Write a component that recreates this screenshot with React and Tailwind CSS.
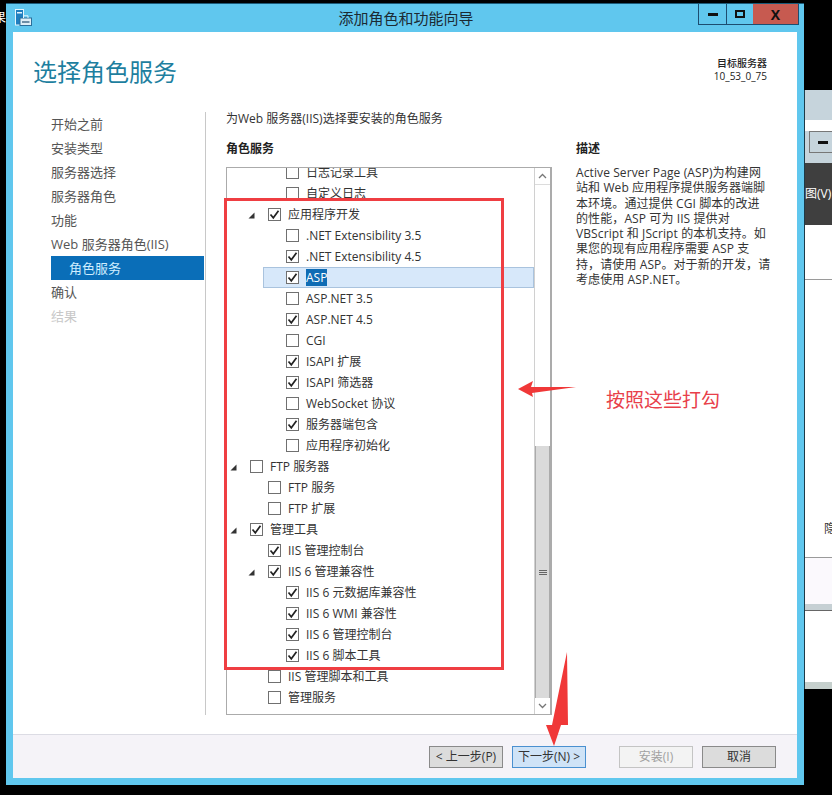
const font = "font-['Open_Sans','Noto_Sans_CJK_SC',sans-serif]";

const rows = [
  { level: 1, label: "日志记录工具" },
  { level: 1, label: "自定义日志" },
  { level: 0.5, label: "应用程序开发", checked: true, open: true },
  { level: 1, label: ".NET Extensibility 3.5" },
  { level: 1, label: ".NET Extensibility 4.5", checked: true },
  { level: 1, label: "ASP", checked: true, selected: true },
  { level: 1, label: "ASP.NET 3.5" },
  { level: 1, label: "ASP.NET 4.5", checked: true },
  { level: 1, label: "CGI" },
  { level: 1, label: "ISAPI 扩展", checked: true },
  { level: 1, label: "ISAPI 筛选器", checked: true },
  { level: 1, label: "WebSocket 协议" },
  { level: 1, label: "服务器端包含", checked: true },
  { level: 1, label: "应用程序初始化" },
  { level: 0, label: "FTP 服务器", open: true },
  { level: 0.5, label: "FTP 服务" },
  { level: 0.5, label: "FTP 扩展" },
  { level: 0, label: "管理工具", checked: true, open: true },
  { level: 0.5, label: "IIS 管理控制台", checked: true },
  { level: 0.5, label: "IIS 6 管理兼容性", checked: true, open: true },
  { level: 1, label: "IIS 6 元数据库兼容性", checked: true },
  { level: 1, label: "IIS 6 WMI 兼容性", checked: true },
  { level: 1, label: "IIS 6 管理控制台", checked: true },
  { level: 1, label: "IIS 6 脚本工具", checked: true },
  { level: 0.5, label: "IIS 管理脚本和工具" },
  { level: 0.5, label: "管理服务" },
];

const navItems = ["开始之前", "安装类型", "服务器选择", "服务器角色", "功能", "Web 服务器角色(IIS)"];

const Checkbox = ({ checked }) => (
  <span className="w-[13px] h-[13px] border border-[#707070] bg-white shrink-0 flex items-center justify-center">
    {checked && (
      <svg width="11" height="11" viewBox="0 0 11 11">
        <path d="M1.5 5.5 L4.3 8.8 L9.5 1.8" fill="none" stroke="#222" strokeWidth="1.7" />
      </svg>
    )}
  </span>
);

const Row = ({ row }) => {
  const pad = row.level === 0 ? "pl-[23px]" : row.level === 0.5 ? "pl-[41px]" : "pl-[59px]";
  return (
    <div className={`relative h-[21px] flex items-center gap-[7px] ${pad}`}>
      {row.selected && (
        <div className="absolute left-[36px] right-0 top-0 h-[21px] bg-[#d7e8fa] border border-[#a9c3de]" />
      )}
      {row.open && (
        <svg
          className={`absolute top-[8px] ${row.level === 0 ? "left-[3px]" : "left-[21px]"}`}
          width="7"
          height="7"
          viewBox="0 0 7 7"
        >
          <path d="M6.5 0.5 V6.5 H0.5 Z" fill="#333" />
        </svg>
      )}
      <div className="relative flex items-center gap-[7px]">
        <Checkbox checked={row.checked} />
        <span className={`whitespace-nowrap ${row.selected ? "bg-[#0f6cb4] text-white leading-[17px]" : ""}`}>
          {row.label}
        </span>
      </div>
    </div>
  );
};

const Scrollbar = () => (
  <div className="w-[17px] shrink-0 flex flex-col border-l border-[#d0d0d0] border-r border-r-[#ababab]">
    <div className="h-[17px] bg-white flex items-center justify-center border-b border-[#dcdcdc]">
      <svg width="9" height="6" viewBox="0 0 9 6">
        <path d="M1 5 L4.5 1.5 L8 5" fill="none" stroke="#777" strokeWidth="1.3" />
      </svg>
    </div>
    <div className="h-[261px] bg-white" />
    <div className="flex-1 bg-[#dadada] border-x border-[#ababab] flex items-center justify-center">
      <div className="w-[8px] flex flex-col gap-[1px]">
        <div className="h-[1px] bg-[#666]" />
        <div className="h-[1px] bg-[#666]" />
        <div className="h-[1px] bg-[#666]" />
      </div>
    </div>
    <div className="h-[16px] bg-white flex items-center justify-center">
      <svg width="9" height="6" viewBox="0 0 9 6">
        <path d="M1 1 L4.5 4.5 L8 1" fill="none" stroke="#777" strokeWidth="1.3" />
      </svg>
    </div>
  </div>
);

const FooterButton = ({ children, className }) => (
  <button className={`w-[74px] h-[22px] border text-[12px] flex items-center justify-center ${className}`}>
    {children}
  </button>
);

const ServerIcon = () => (
  <svg width="17" height="17" viewBox="0 0 17 17" className="shrink-0">
    <rect x="0.5" y="0.5" width="8" height="15.5" fill="#1f7fc0" stroke="#e4f5fc" />
    <rect x="2" y="3" width="5" height="1.5" fill="#e6f4fb" />
    <rect x="5" y="9" width="11.5" height="7.5" fill="#dfeef6" stroke="#2b6f9a" />
    <rect x="7" y="12" width="7.5" height="2" fill="#6d8ea6" />
    <path d="M8.5 9 V6.8 H13 V9" fill="none" stroke="#e4f5fc" />
  </svg>
);

const App = () => {
  return (
    <div className={`relative w-[832px] h-[795px] bg-black overflow-hidden flex items-start ${font}`}>
      {/* stray letter from the window behind */}
      <div className="w-[6px] h-[40px] shrink-0 overflow-hidden relative">
        <span className="absolute right-0 top-[11px] text-white text-[12px] leading-[14px]">果</span>
      </div>

      {/* wizard window */}
      <div className="w-[798px] h-[782px] mt-[3px] shrink-0 bg-[#60c7ee] px-[7px] pb-[7px] flex flex-col border-t border-[#1c5a78]">
        <div className="h-[28px] relative shrink-0 flex items-start">
          <div className="absolute left-[2px] top-[5px]">
            <ServerIcon />
          </div>
          <div className="flex-1 text-center text-[15px] leading-[28px] text-[#1b2a33] pl-[101px]">添加角色和功能向导</div>
          <div className="flex h-[21px] -mr-[2px] items-stretch">
            <div className="w-[29px] border border-[#1d4d70] border-t-0 flex items-center justify-center">
              <div className="w-[10px] h-[3px] bg-[#111]" />
            </div>
            <div className="w-[26px] border-b border-[#1d4d70] flex items-center justify-center">
              <div className="w-[10px] h-[8px] border-2 border-[#111]" />
            </div>
            <div className="w-[46px] bg-[#c75a50] border-b border-r border-[#1d4d70] flex items-center justify-center text-[#111] text-[14px] font-bold">
              X
            </div>
          </div>
        </div>

        <div className="flex-1 bg-white flex flex-col min-h-0">
          <div className="h-[80px] shrink-0 flex justify-between pl-[20px] pr-[30px]">
            <h1 className="text-[24px] leading-[32px] mt-[24px] text-[#1e7f9f] font-normal">选择角色服务</h1>
            <div className="text-[10px] leading-[13px] mt-[25px] text-[#222] text-right">
              <div className="font-medium">目标服务器</div>
              <div>10_53_0_75</div>
            </div>
          </div>

          <div className="flex-1 flex min-h-0">
            <nav className="w-[192px] shrink-0 pl-[38px] pr-[1px] text-[13px] text-[#555]">
              {navItems.map((item) => (
                <div key={item} className="h-[24px] leading-[24px] whitespace-nowrap">
                  {item}
                </div>
              ))}
              <div className="h-[24px] leading-[24px] bg-[#0a6eb8] text-[#cfeeff] pl-[18px]">角色服务</div>
              <div className="h-[24px] leading-[24px]">确认</div>
              <div className="h-[24px] leading-[24px] text-[#c8c8c8]">结果</div>
            </nav>

            <div className="flex-1 flex border-l border-[#c8c8c8] h-[603px] pl-[20px] text-[12px] text-[#333]">
              <div className="w-[326px] shrink-0 flex flex-col">
                <div className="h-[13px] leading-[14px] whitespace-nowrap">为Web 服务器(IIS)选择要安装的角色服务</div>
                <div className="h-[42px] leading-[48px] font-bold text-[#222] shrink-0">角色服务</div>
                <div className="h-[548px] border border-[#ababab] flex overflow-hidden">
                  <div className="flex-1 overflow-hidden min-w-0">
                    <div className="-mt-[6px]">
                      {rows.map((row) => (
                        <Row key={row.label} row={row} />
                      ))}
                    </div>
                  </div>
                  <Scrollbar />
                </div>
              </div>
              <div className="ml-[24px] w-[195px]">
                <div className="h-[13px]" />
                <div className="h-[42px] leading-[48px] font-bold text-[#222]">描述</div>
                <p className="text-[12px] leading-[15.3px] -mt-[2px] tracking-[0.1px]">
                  Active Server Page (ASP)为构建网站和 Web 应用程序提供服务器端脚本环境。通过提供 CGI 脚本的改进的性能，ASP 可为 IIS 提供对 VBScript 和 JScript 的本机支持。如果您的现有应用程序需要 ASP 支持，请使用 ASP。对于新的开发，请考虑使用 ASP.NET。
                </p>
              </div>
            </div>
          </div>

          <div className="h-[44px] shrink-0 bg-[#f5f3f8] border-t border-[#dcdce4] flex items-center justify-end pr-[21px] text-[#333]">
            <FooterButton className="bg-[#dcdcdc] border-[#8a8a8a]">&lt; 上一步(P)</FooterButton>
            <FooterButton className="ml-[9px] bg-[#cfe3f7] border-[#4a90d0]">下一步(N) &gt;</FooterButton>
            <FooterButton className="ml-[33px] bg-[#f3f3f3] border-[#c4c4c4] text-[#a0a0a0]">安装(I)</FooterButton>
            <FooterButton className="ml-[9px] bg-[#dcdcdc] border-[#8a8a8a]">取消</FooterButton>
          </div>
        </div>
      </div>

      {/* window behind */}
      <div className="flex-1 h-[689px] flex flex-col bg-white">
        <div className="h-[90px] bg-black" />
        <div className="flex-1 flex flex-col border-l border-[#1c3a48]">
          <div className="h-[30px] bg-[#c6d4dc]" />
          <div className="h-[11px] bg-white" />
          <div className="h-[32px] bg-[#c6d4dc] pl-[4px]">
            <div className="h-[22px] w-full border border-[#777] flex items-center pl-[8px]">
              <div className="w-[10px] h-[3px] bg-[#111]" />
            </div>
          </div>
          <div className="h-[62px] bg-[#3f3f3f] text-white text-[12px] leading-[62px] whitespace-nowrap">图(V)</div>
          <div className="h-[55px] bg-white border-b border-[#9a9a9a]" />
          <div className="h-[277px] bg-white pt-[242px] pl-[19px] text-[12px] leading-[14px] text-[#333] whitespace-nowrap">隐</div>
          <div className="h-[47px] bg-[#fbf9fd] border-t border-[#9a9a9a]" />
          <div className="h-[7px] bg-[#c6d0d4] border-b border-[#666]" />
          <div className="flex-1 bg-white" />
          <div className="h-[7px] bg-[#c6d0cd]" />
        </div>
      </div>

      {/* annotations */}
      <div className="absolute left-[224px] top-[198px] w-[280px] h-[472px] border-[3px] border-[#ef3e42]" />
      <svg className="absolute left-[515px] top-[378px]" width="64" height="22" viewBox="0 0 64 22">
        <path d="M3 11 L18 3 L16 9 L61 9 L17 15 L18 19 Z" fill="#f03838" />
      </svg>
      <svg className="absolute left-[543px] top-[650px]" width="28" height="98" viewBox="0 0 28 98">
        <path d="M24 2 L25 75 L18 75 L11 96 L3 75 L9 75 Z" fill="#f03838" />
      </svg>
      <div className="absolute left-[606px] top-[387px] text-[19px] leading-[26px] text-[#e8404a] whitespace-nowrap">按照这些打勾</div>
    </div>
  );
};

export default App;
